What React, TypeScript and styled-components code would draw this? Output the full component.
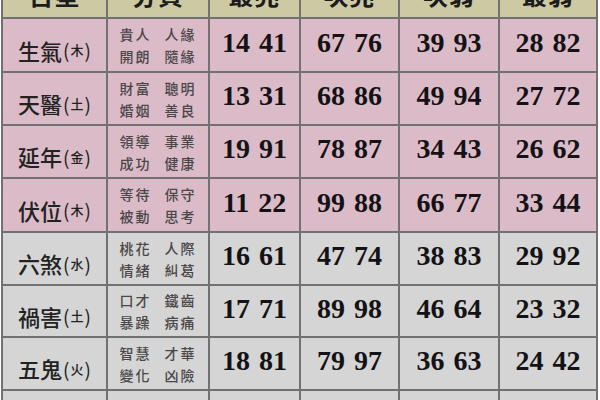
import React from "react";
import styled, { createGlobalStyle } from "styled-components";

const Global = createGlobalStyle`
  html, body { margin: 0; padding: 0; background: #ffffff; overflow: hidden; }
  body { width: 600px; height: 400px; }
`;

type Tone = "head" | "pink" | "gray";

const bg: Record<Tone, string> = {
  head: "#cdcaa3",
  pink: "#dbbbc8",
  gray: "#d5d5d5",
};

const Table = styled.div`
  display: grid;
  grid-template-columns: 103px 100px 89px 97px 98px 96px;
  grid-template-rows: 17px 52px 51px 51px 52px 51px 50px 51px 51px;
  gap: 2px;
  padding: 0 2px 2px 2px;
  margin-left: 1px;
  width: max-content;
  background: #727070;
`;

const Cell = styled.div<{ $tone: Tone }>`
  background: ${(p) => bg[p.$tone]};
  display: flex;
  align-items: center;
  justify-content: center;
  overflow: hidden;
`;

const HeadCell = styled(Cell)`
  align-items: flex-end;
`;

const HeadText = styled.span`
  font-family: "Noto Sans CJK TC", "Noto Sans CJK SC", sans-serif;
  font-size: 25px;
  font-weight: 700;
  line-height: 1;
  color: #1c1c1c;
  letter-spacing: 1px;
  margin-bottom: 10px;
`;

const NameCell = styled(Cell)`
  padding-top: 9px;
  box-sizing: border-box;
`;

const Name = styled.span`
  font-family: "Noto Sans CJK TC", "Noto Sans CJK SC", sans-serif;
  font-size: 22px;
  font-weight: 500;
  color: #222;
  line-height: 1;
  display: flex;
  align-items: center;
`;

const Paren = styled.span`
  font-size: 19px;
  font-weight: 400;
  display: flex;
  align-items: center;
  margin-left: 1px;
`;

const Element = styled.span`
  font-size: 13px;
  font-weight: 500;
  margin: 0 1px;
`;

const TraitCell = styled(Cell)`
  flex-direction: column;
  gap: 5px;
  padding-top: 1px;
  box-sizing: border-box;
`;

const TraitLine = styled.div`
  display: flex;
  gap: 13px;
  font-family: "Noto Sans CJK TC", "Noto Sans CJK SC", sans-serif;
  font-size: 14px;
  font-weight: 500;
  line-height: 17px;
  color: #4a4749;
  letter-spacing: 2px;
`;

const NumCell = styled(Cell)`
  padding-bottom: 5px;
  box-sizing: border-box;
`;

const Num = styled.span`
  font-family: "Liberation Serif", "DejaVu Serif", serif;
  font-size: 28px;
  font-weight: 700;
  color: #141214;
  word-spacing: 2px;
`;

const headers = ["吉星", "分質", "最亮", "次亮", "次弱", "最弱"];

type Row = {
  name: string;
  el: string;
  traits: [string, string, string, string];
  nums: [string, string, string, string];
  tone: Tone;
};

const rows: Row[] = [
  { name: "生氣", el: "木", traits: ["貴人", "人緣", "開朗", "隨緣"], nums: ["14 41", "67 76", "39 93", "28 82"], tone: "pink" },
  { name: "天醫", el: "土", traits: ["財富", "聰明", "婚姻", "善良"], nums: ["13 31", "68 86", "49 94", "27 72"], tone: "pink" },
  { name: "延年", el: "金", traits: ["領導", "事業", "成功", "健康"], nums: ["19 91", "78 87", "34 43", "26 62"], tone: "pink" },
  { name: "伏位", el: "木", traits: ["等待", "保守", "被動", "思考"], nums: ["11 22", "99 88", "66 77", "33 44"], tone: "pink" },
  { name: "六煞", el: "水", traits: ["桃花", "人際", "情緒", "糾葛"], nums: ["16 61", "47 74", "38 83", "29 92"], tone: "gray" },
  { name: "禍害", el: "土", traits: ["口才", "鐵齒", "暴躁", "病痛"], nums: ["17 71", "89 98", "46 64", "23 32"], tone: "gray" },
  { name: "五鬼", el: "火", traits: ["智慧", "才華", "變化", "凶險"], nums: ["18 81", "79 97", "36 63", "24 42"], tone: "gray" },
  { name: "絕命", el: "金", traits: ["衝動", "極端", "破財", "好勝"], nums: ["12 21", "69 96", "48 84", "37 73"], tone: "gray" },
];

export default function App() {
  return (
    <>
      <Global />
      <Table>
        {headers.map((h) => (
          <HeadCell key={h} $tone="head">
            <HeadText>{h}</HeadText>
          </HeadCell>
        ))}
        {rows.map((r) => (
          <React.Fragment key={r.name}>
            <NameCell $tone={r.tone}>
              <Name>
                {r.name}
                <Paren>
                  (<Element>{r.el}</Element>)
                </Paren>
              </Name>
            </NameCell>
            <TraitCell $tone={r.tone}>
              <TraitLine>
                <span>{r.traits[0]}</span>
                <span>{r.traits[1]}</span>
              </TraitLine>
              <TraitLine>
                <span>{r.traits[2]}</span>
                <span>{r.traits[3]}</span>
              </TraitLine>
            </TraitCell>
            {r.nums.map((n, i) => (
              <NumCell key={i} $tone={r.tone}>
                <Num>{n}</Num>
              </NumCell>
            ))}
          </React.Fragment>
        ))}
      </Table>
    </>
  );
}
